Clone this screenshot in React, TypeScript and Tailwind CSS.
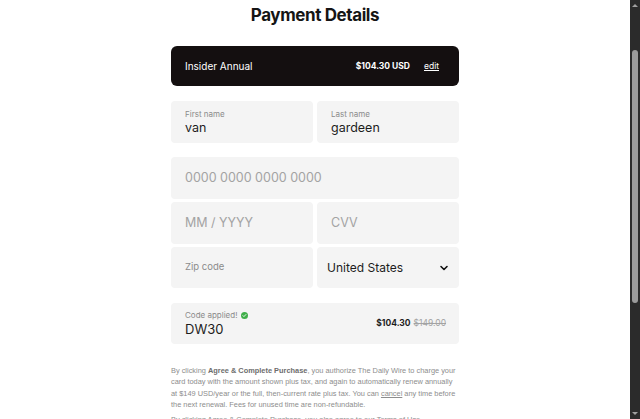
import React from "react"

const font = { fontFamily: "Inter, 'Liberation Sans', sans-serif" }
const legalFont = { fontFamily: "'Liberation Sans', Arial, sans-serif" }

const Field: React.FC<{ label?: string; value?: string; placeholder?: string; className?: string }> = ({
  label,
  value,
  placeholder,
  className = "",
}) => (
  <div className={`flex h-[42px] flex-col justify-center rounded-[4px] bg-[#f4f4f4] px-[14px] ${className}`}>
    {label && <span className="text-[8px] leading-[11px] text-[#8b8b8b]">{label}</span>}
    {value && <span className="text-[12.5px] leading-[16px] text-[#1d1d1d]">{value}</span>}
    {placeholder && <span className="text-[12.5px] leading-[16px] text-[#a3a3a3]">{placeholder}</span>}
  </div>
)

export default function App() {
  return (
    <div className="flex h-[419px] w-[640px] overflow-hidden bg-white" style={font}>
      <div className="flex flex-1 flex-col items-center">
        <h1 className="mt-[3px] h-[24px] text-[17px] font-bold leading-[24px] tracking-[-0.4px] text-[#151515]">
          Payment Details
        </h1>

        <div className="mt-[19px] flex w-[288px] flex-col">
          {/* plan summary */}
          <div className="flex h-[40px] items-center justify-between rounded-[6px] bg-[#140f10] pl-[14px] pr-[20px] text-white">
            <span className="text-[10px]">Insider Annual</span>
            <div className="flex items-center gap-[14px]">
              <span className="text-[8.5px] font-bold">$104.30 USD</span>
              <span className="text-[8.5px] underline">edit</span>
            </div>
          </div>

          {/* name */}
          <div className="mt-[15px] grid grid-cols-2 gap-[4px]">
            <Field label="First name" value="van" />
            <Field label="Last name" value="gardeen" />
          </div>

          {/* card */}
          <Field className="mt-[14px]" placeholder="0000 0000 0000 0000" />
          <div className="mt-[3px] grid grid-cols-2 gap-[4px]">
            <Field className="h-[41px]" placeholder="MM / YYYY" />
            <Field className="h-[41px]" placeholder="CVV" />
          </div>
          <div className="mt-[3px] grid grid-cols-2 gap-[4px]">
            <div className="flex h-[41px] items-center rounded-[4px] bg-[#f4f4f4] px-[14px]">
              <span className="text-[9.5px] text-[#8b8b8b]">Zip code</span>
            </div>
            <div className="flex h-[41px] items-center justify-between rounded-[4px] bg-[#f4f4f4] pl-[10px] pr-[9px]">
              <span className="text-[12px] text-[#1d1d1d]">United States</span>
              <svg width="12" height="12" viewBox="0 0 24 24" fill="none" stroke="#111" strokeWidth="3.2" strokeLinecap="round" strokeLinejoin="round">
                <path d="M6 9l6 6 6-6" />
              </svg>
            </div>
          </div>

          {/* promo code */}
          <div className="mt-[15px] flex h-[41px] items-center justify-between rounded-[4px] bg-[#f4f4f4] pl-[14px] pr-[13px]">
            <div className="flex flex-col">
              <span className="flex items-center gap-[4px] text-[8px] leading-[11px] text-[#8b8b8b]">
                Code applied!
                <svg width="7" height="7" viewBox="0 0 16 16">
                  <circle cx="8" cy="8" r="8" fill="#3fae49" />
                  <path d="M4.5 8.3l2.2 2.2 4.6-4.8" fill="none" stroke="white" strokeWidth="2" strokeLinecap="round" strokeLinejoin="round" />
                </svg>
              </span>
              <span className="text-[13px] leading-[17px] text-[#1d1d1d]">DW30</span>
            </div>
            <div className="flex items-center gap-[3px] text-[8.5px]">
              <span className="font-bold text-[#1d1d1d]">$104.30</span>
              <span className="text-[#a3a3a3] line-through">$149.00</span>
            </div>
          </div>

          {/* legal */}
          <div className="mt-[21px] flex flex-col text-[7.4px] leading-[11.4px] text-[#8d8d8d]" style={legalFont}>
            <span className="whitespace-nowrap">
              By clicking <b className="text-[#6d6d6d]">Agree &amp; Complete Purchase</b>, you authorize The Daily Wire to charge your
            </span>
            <span className="whitespace-nowrap">card today with the amount shown plus tax, and again to automatically renew annually</span>
            <span className="whitespace-nowrap">
              at $149 USD/year or the full, then-current rate plus tax. You can <span className="underline">cancel</span> any time before
            </span>
            <span className="whitespace-nowrap">the next renewal. Fees for unused time are non-refundable.</span>
            <span className="mt-[3px] whitespace-nowrap">By clicking Agree &amp; Complete Purchase, you also agree to our Terms of Use.</span>
          </div>
        </div>
      </div>

      {/* scrollbar */}
      <div className="flex w-[10px] flex-col items-center bg-[#2b2b2b]">
        <div className="mt-[4px] h-0 w-0 border-x-[3px] border-b-[3px] border-x-transparent border-b-[#a0a0a0]" />
        <div className="mt-[43px] h-[253px] w-[6px] rounded-[3px] bg-[#9b9b9b]" />
        <div className="mt-auto mb-[4px] h-0 w-0 border-x-[3px] border-t-[3px] border-x-transparent border-t-[#a0a0a0]" />
      </div>
    </div>
  )
}
